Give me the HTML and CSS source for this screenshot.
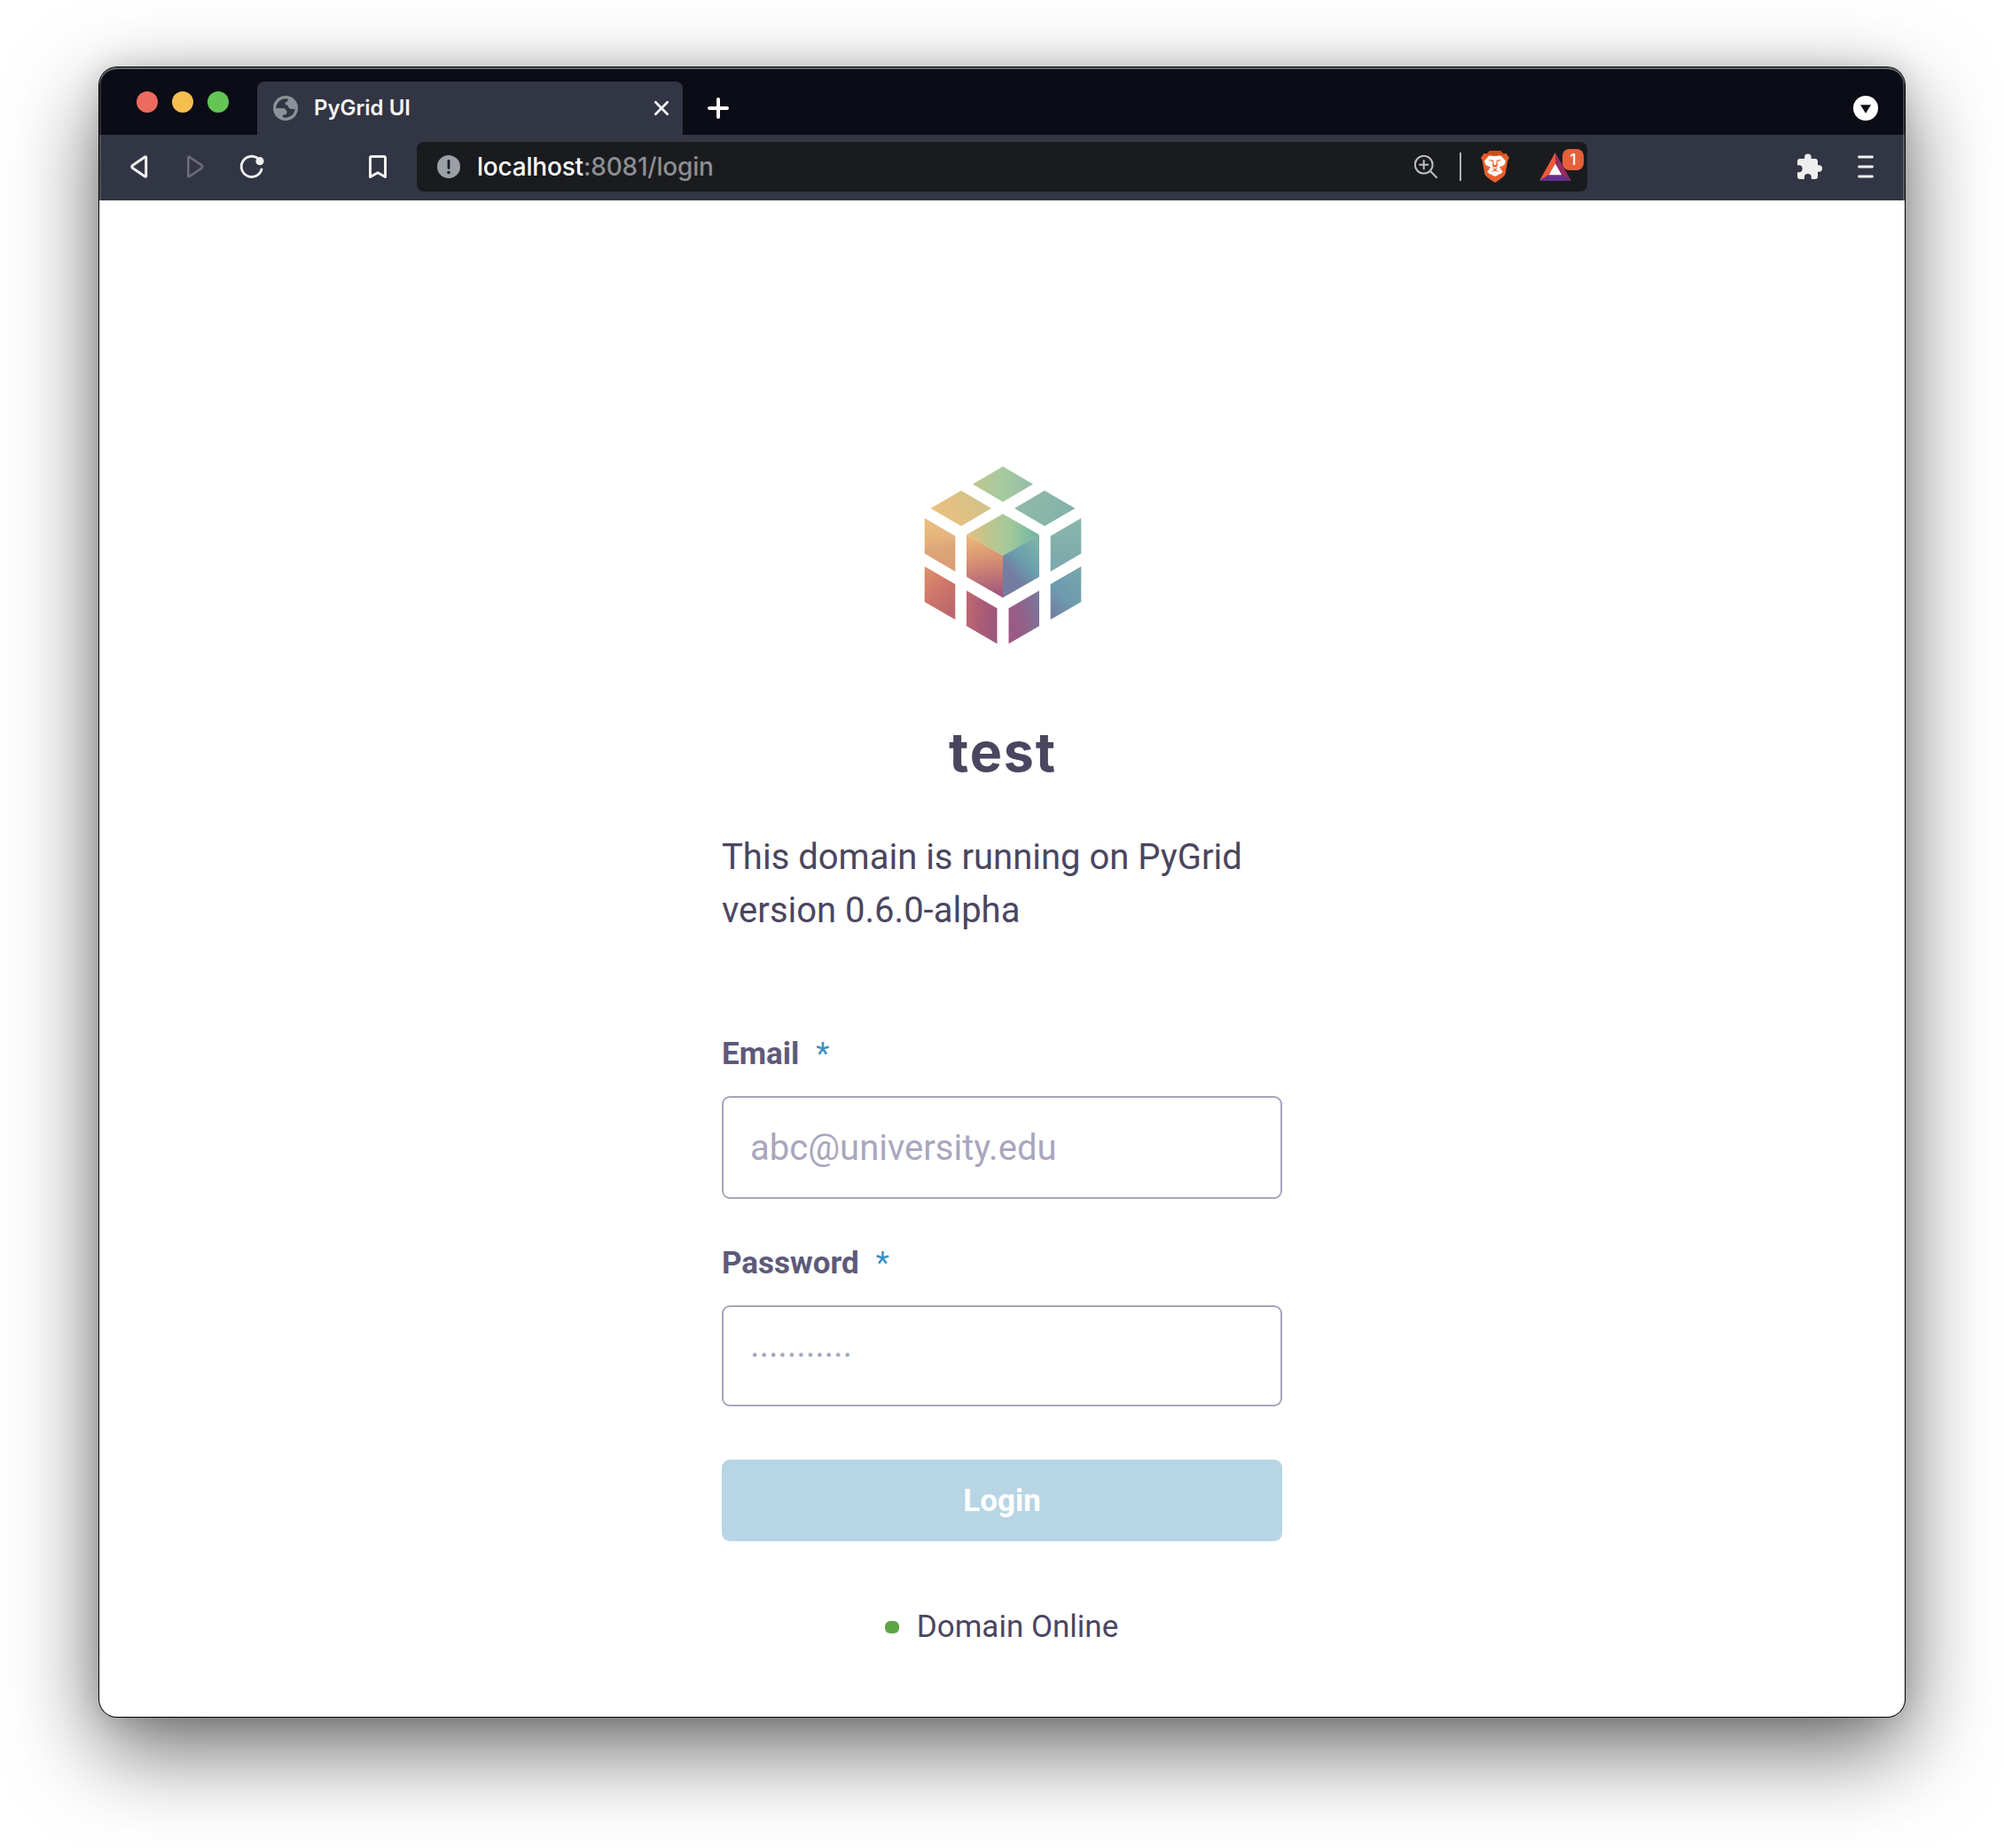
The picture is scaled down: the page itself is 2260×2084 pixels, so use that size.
FILE: index.html
```html
<!DOCTYPE html>
<html lang="en">
<head>
<meta charset="utf-8">
<title>PyGrid UI</title>
<link rel="stylesheet" href="styles.css">
</head>
<body>
<div class="window">
  <header class="tabstrip">
    <div class="lights"><i class="light red"></i><i class="light yellow"></i><i class="light green"></i></div>
    <div class="tab">
      <svg class="globe" width="28" height="28" viewBox="0 0 28 28"><circle cx="14" cy="14" r="14" fill="#8c9197"/><path d="M3.300 13.900A10.800 10.800 0 0 1 16.800 3.600Q17 7 13.600 7.400Q13.400 10.600 16.600 10.700Q17.200 14.800 21 15H24.700A10.800 10.800 0 0 1 11 24.300V21.400H13.400Q15.900 21 15.400 18Q14.800 14.100 11 13.900Z" fill="#323543"/></svg>
      <span class="tab-title">PyGrid UI</span>
      <svg class="close" width="18" height="18" viewBox="0 0 18 18"><path d="M2.300 2.300L15.700 15.700M15.700 2.300L2.300 15.700" stroke="#f4f4f5" stroke-width="2.700" stroke-linecap="round"/></svg>
    </div>
    <svg class="plus" width="24" height="24" viewBox="0 0 24 24"><path d="M12 2V22M2 12H22" stroke="#fff" stroke-width="4" stroke-linecap="round"/></svg>
    <svg class="chevron" width="28" height="28" viewBox="0 0 28 28"><circle cx="14" cy="14" r="14" fill="#fff"/><path d="M8 10.300H20L14 19.700Z" fill="#0b0c15"/></svg>
  </header>
  <nav class="toolbar">
    <svg class="back" width="20" height="28" viewBox="0 0 20 28"><path d="M17.700 3.600V24.400Q17.600 25.700 16.400 25L2.600 15.600Q1 14 2.600 12.400L16.400 3Q17.600 2.300 17.700 3.600Z" fill="none" stroke="#f0f0f1" stroke-width="3" stroke-linejoin="round"/></svg>
    <svg class="forward" width="20" height="28" viewBox="0 0 20 28"><path d="M2.300 3.600V24.400Q2.400 25.700 3.600 25L17.400 15.600Q19 14 17.400 12.400L3.600 3Q2.400 2.300 2.300 3.600Z" fill="none" stroke="#6a6c76" stroke-width="2.600" stroke-linejoin="round"/></svg>
    <svg class="reload" width="28" height="28" viewBox="0 0 28 28"><path d="M19.600 3.800A11.600 11.600 0 1 0 25 17" fill="none" stroke="#f0f0f1" stroke-width="2.800" stroke-linecap="round"/><circle cx="23" cy="7.700" r="4.600" fill="#f0f0f1"/></svg>
    <svg class="bookmark" width="20" height="28" viewBox="0 0 20 28"><path d="M3 2.500H17Q18.500 2.500 18.500 4V25.500L10 20.700L1.500 25.500V4Q1.500 2.500 3 2.500Z" fill="none" stroke="#f0f0f1" stroke-width="3" stroke-linejoin="round"/></svg>
    <div class="urlbar">
      <svg class="info" width="26" height="26" viewBox="0 0 26 26"><circle cx="13" cy="13" r="13" fill="#9aa0a6"/><path d="M13 6.500V14.500" stroke="#1a1b1f" stroke-width="2.800" stroke-linecap="round"/><circle cx="13" cy="19.500" r="1.800" fill="#1a1b1f"/></svg>
      <span class="url">localhost<span class="path">:8081/login</span></span>
      <svg class="magnifier" width="26" height="26" viewBox="0 0 26 26"><g fill="none" stroke="#bcbdc0" stroke-width="2"><circle cx="10.700" cy="10.700" r="9.900"/><path d="M10.700 6V15.400M6 10.700H15.400M17.800 17.800L25.200 25.200" stroke-linecap="round"/></g></svg>
      <i class="divider"></i>
      <svg class="brave" width="32" height="36" viewBox="0 0 32 36"><path d="M10 0H22L25 3.200L28.500 3L32 8L30.500 10.500L27.500 26.500Q26.500 29.500 16 36Q5.500 29.500 4.500 26.500L1.500 10.500L0 8L3.500 3L7 3.200Z" fill="#e9602b"/><path d="M10 0H22L25 3.200L28 3L27 5H5L4 3L7 3.200Z" fill="#d14d1d"/><path d="M9.500 5.500L16 6.300L22.500 5.500L28 11.500L27 15L22.500 21L24.800 23.500Q24 25.500 16 29Q8 25.500 7.200 23.500L9.500 21L5 15L4 11.500Z" fill="#fff"/><path d="M8 10.600L13.600 12.300L13 16L14 18.500H18L19 16L18.400 12.300L24 10.600L19.500 10.200L17.600 11.200L17.300 16H14.700L14.400 11.200L12.500 10.200ZM13 18.500L16 20.500L19 18.500L17 21.800L21.500 24L16 22.800L10.500 24L15 21.800ZM5.500 16L11 18.500L9.500 21ZM26.500 16L21 18.500L22.500 21Z" fill="#e9602b"/></svg>
      <div class="rewards">
        <svg width="36" height="32" viewBox="0 0 36 32"><path d="M18 0L0 32L11 25L18 12.500Z" fill="#f15a38"/><path d="M18 0L36 32L25 25L18 12.500Z" fill="#982b62"/><path d="M0 32H36L25 25H11Z" fill="#64308e"/><path d="M18 12.500L25.200 25.200H10.800Z" fill="#fff"/></svg>
        <span class="badge">1</span>
      </div>
    </div>
    <svg class="puzzle" width="30" height="30" viewBox="0 0 30 30"><path d="M4 6H9V4.200A3.800 3.800 0 0 1 16.600 4.200V6H21Q24 6 24 9V13.200H25.200A3.800 3.800 0 0 1 25.200 20.800H24V26Q24 29 21 29H16.800V27A4 4 0 0 0 8.800 27V29H4Q1 29 1 26V21.200H2.600A4 4 0 0 0 2.600 13.200H1V9Q1 6 4 6Z" fill="#eee"/></svg>
    <svg class="menu" width="18" height="26" viewBox="0 0 18 26"><path d="M1.500 2H16.500M1.500 13H16.500M1.500 24H16.500" stroke="#f0f0f1" stroke-width="2.800" stroke-linecap="round"/></svg>
  </nav>
  <main class="page">
    <svg class="logo" width="178" height="202" viewBox="0 0 178 202">
      <defs>
        <linearGradient id="t1" x1="0" x2="1" y1="0" y2="0"><stop offset="0" stop-color="#c0c68f"/><stop offset=".5" stop-color="#a5cba0"/><stop offset="1" stop-color="#94bba8"/></linearGradient>
        <linearGradient id="t2" x1="0" x2="1" y1=".3" y2="0"><stop offset="0" stop-color="#ebbf7e"/><stop offset="1" stop-color="#ccc38d"/></linearGradient>
        <linearGradient id="t3" x1="0" x2="1" y1="0" y2=".2"><stop offset="0" stop-color="#91bba7"/><stop offset="1" stop-color="#84b2aa"/></linearGradient>
        <linearGradient id="l1" x1="0" x2=".1" y1="0" y2="1"><stop offset="0" stop-color="#ebbf7e"/><stop offset=".4" stop-color="#e5b47d"/><stop offset=".6" stop-color="#dda779"/><stop offset="1" stop-color="#dc9c74"/></linearGradient>
        <linearGradient id="l2" x1="0" x2=".5" y1="0" y2="1"><stop offset="0" stop-color="#dc946e"/><stop offset=".5" stop-color="#d0786a"/><stop offset="1" stop-color="#bd686e"/></linearGradient>
        <linearGradient id="r1" x1="0" x2="0" y1="0" y2="1"><stop offset="0" stop-color="#8ab7a8"/><stop offset="1" stop-color="#79a7ae"/></linearGradient>
        <linearGradient id="r2" x1=".8" x2=".2" y1="0" y2="1"><stop offset="0" stop-color="#77a6ae"/><stop offset=".6" stop-color="#6c9aae"/><stop offset="1" stop-color="#757fa2"/></linearGradient>
        <linearGradient id="b1" x1="0" x2="1" y1="0" y2=".2"><stop offset="0" stop-color="#c2696e"/><stop offset=".5" stop-color="#ad5e75"/><stop offset="1" stop-color="#9d577d"/></linearGradient>
        <linearGradient id="b2" x1="0" x2="1" y1=".4" y2="0"><stop offset="0" stop-color="#9c5a83"/><stop offset=".4" stop-color="#91628a"/><stop offset="1" stop-color="#777b9f"/></linearGradient>
        <linearGradient id="ct" x1="0" x2="1" y1=".4" y2=".4"><stop offset="0" stop-color="#e4bd7f"/><stop offset=".3" stop-color="#bfc68f"/><stop offset=".6" stop-color="#a0c99c"/><stop offset="1" stop-color="#70b2a0"/></linearGradient>
        <linearGradient id="cl" x1=".35" x2=".45" y1="0" y2="1"><stop offset="0" stop-color="#ebb57a"/><stop offset=".35" stop-color="#db9873"/><stop offset=".65" stop-color="#c37975"/><stop offset="1" stop-color="#9f5780"/></linearGradient>
        <linearGradient id="cr" x1=".8" x2=".2" y1="0" y2="1"><stop offset="0" stop-color="#7eb2a9"/><stop offset=".4" stop-color="#6aa0ae"/><stop offset=".7" stop-color="#737ea1"/><stop offset="1" stop-color="#767ba0"/></linearGradient>
      </defs>
      <path fill="url(#t1)" d="M89 0L123 20L89 40L55 20Z"/>
      <path fill="url(#t2)" d="M42 27.300L76 47.300L42 67.300L7.500 47.300Z"/>
      <path fill="url(#t3)" d="M136 27.300L170.500 47.300L136 67.300L102 47.300Z"/>
      <path fill="url(#l1)" d="M.7 58.300L35.300 78.500V118.500L.7 98.300Z"/>
      <path fill="url(#l2)" d="M.7 112.700L35.300 132.700V172.700L.7 152.700Z"/>
      <path fill="url(#r1)" d="M177.300 58.300L142.700 78.500V118.500L177.300 98.300Z"/>
      <path fill="url(#r2)" d="M177.300 112.700L142.700 132.700V172.700L177.300 152.700Z"/>
      <path fill="url(#b1)" d="M48 140L82.500 160V200L48 180Z"/>
      <path fill="url(#b2)" d="M130 140L95.500 160V200L130 180Z"/>
      <path fill="url(#ct)" d="M89 53.500L130 77L89 101L48 77Z"/>
      <path fill="url(#cl)" d="M48 77L89 100.700V148L48 124.500Z"/>
      <path fill="url(#cr)" d="M130 77L89 100.700V148L130 124.500Z"/>
    </svg>
    <h1 class="title">test</h1>
    <p class="desc">This domain is running on PyGrid version 0.6.0-alpha</p>
    <form class="form">
      <label class="label" for="email">Email<span class="star">*</span></label>
      <input class="input email" id="email" type="email" placeholder="abc@university.edu">
      <label class="label second" for="password">Password<span class="star">*</span></label>
      <input class="input password" id="password" type="password" placeholder="···········">
      <button class="login" type="button">Login</button>
    </form>
    <div class="status"><i class="dot"></i>Domain Online</div>
  </main>
</div>
</body>
</html>
```
FILE: styles.css
```css
* { box-sizing: border-box; }
html { background: #fff; }
body { margin: 0; padding: 76px 112px 148px; height: 2084px; overflow: hidden; }
svg { display: block; flex: none; }
.window {
  height: 1860px;
  border-radius: 20px;
  background: #fff;
  box-shadow: 0 0 0 1px #000, 0 36px 100px rgba(0, 0, 0, .6), 0 0 32px rgba(0, 0, 0, .14);
}
.tabstrip {
  display: flex;
  height: 76px;
  padding-right: 30px;
  background: #0b0c15;
  border-radius: 20px 20px 0 0;
  box-shadow: inset 0 2px 0 #62676a, inset 2px 0 0 #2c2d35, inset -2px 0 0 #3a3b43;
}
.lights { display: flex; gap: 16px; width: 178px; padding: 27px 0 0 42px; }
.light { width: 24px; height: 24px; border-radius: 50%; }
.red { background: #ec6a5e; }
.yellow { background: #f5bf4f; }
.green { background: #62c554; }
.tab {
  display: flex;
  align-items: center;
  width: 480px;
  height: 60px;
  margin-top: 16px;
  padding: 0 15px 0 18px;
  background: #323543;
  border-radius: 8px 8px 0 0;
}
.tab-title { margin-left: 18px; font: 600 24px/30px Inter, sans-serif; color: #f4f4f5; }
.close { margin-left: auto; }
.plus { margin: 34px 0 0 28px; }
.chevron { margin: 32px 0 0 auto; }
.toolbar {
  display: flex;
  align-items: center;
  height: 74px;
  padding: 0 35px 2px 35px;
  background: #323543;
  box-shadow: inset 2px 0 0 #4b4e5b, inset -2px 0 0 #5a5c68;
}
.forward { margin-left: 43px; }
.reload { margin-left: 40px; }
.bookmark { margin-left: 118px; }
.urlbar {
  display: flex;
  align-items: center;
  width: 1320px;
  height: 56px;
  margin-left: 34px;
  padding: 0 18px 0 23px;
  background: #1a1b1f;
  border-radius: 8px;
}
.url { margin-left: 19px; font: 450 28px/36px Inter, sans-serif; letter-spacing: -.2px; color: #fff; }
.path { color: #8d8e91; }
.magnifier { margin-left: auto; }
.divider { width: 2px; height: 32px; margin-left: 25px; background: #b0b1b4; }
.brave { margin-left: 22px; }
.rewards { position: relative; margin-left: 34px; }
.badge {
  position: absolute;
  left: 26px;
  top: -4px;
  width: 24px;
  height: 24px;
  border-radius: 8px;
  background: #e5603b;
  color: #fff;
  font: 500 17px/24px Inter, sans-serif;
  text-align: center;
}
.puzzle { margin-left: auto; }
.menu { margin-left: 39px; }
.page {
  display: flex;
  flex-direction: column;
  align-items: center;
  padding-top: 300px;
  font-family: Roboto, sans-serif;
  color: #4a4660;
}
.logo { margin-left: 2px; }
.title { margin: 75px 0 0; font: 650 61px/90px Inter, sans-serif; letter-spacing: 1.800px; text-indent: 2px; }
.desc { width: 632px; margin: 44px 0 0; font-size: 40px; line-height: 60px; }
.form { display: flex; flex-direction: column; width: 632px; margin-top: 104px; }
.label { height: 54px; font-weight: 700; font-size: 35px; line-height: 56px; color: #5e5a79; }
.second { margin-top: 45px; }
.star { margin-left: 19px; font-weight: 400; color: #3c8fbf; }
.input {
  width: 632px;
  margin: 21px 0 0;
  padding: 0 30px;
  border: 2px solid #a8a4bc;
  border-radius: 9px;
  background: #fff;
  font: 400 40px/60px Roboto, sans-serif;
}
.input::placeholder { color: #a9a6be; opacity: 1; }
.email { height: 116px; }
.password { height: 114px; padding-bottom: 2px; }
.login {
  height: 92px;
  margin: 60px 0 0;
  padding: 2px 0 0;
  border: 0;
  border-radius: 9px;
  background: #b7d5e5;
  color: #fff;
  font: 700 35px/54px Roboto, sans-serif;
}
.status { display: flex; align-items: center; gap: 20px; margin: 70px 1px 0 0; font-size: 35px; line-height: 54px; }
.dot { width: 16px; height: 14px; border-radius: 6px; background: #5ca544; }
```
